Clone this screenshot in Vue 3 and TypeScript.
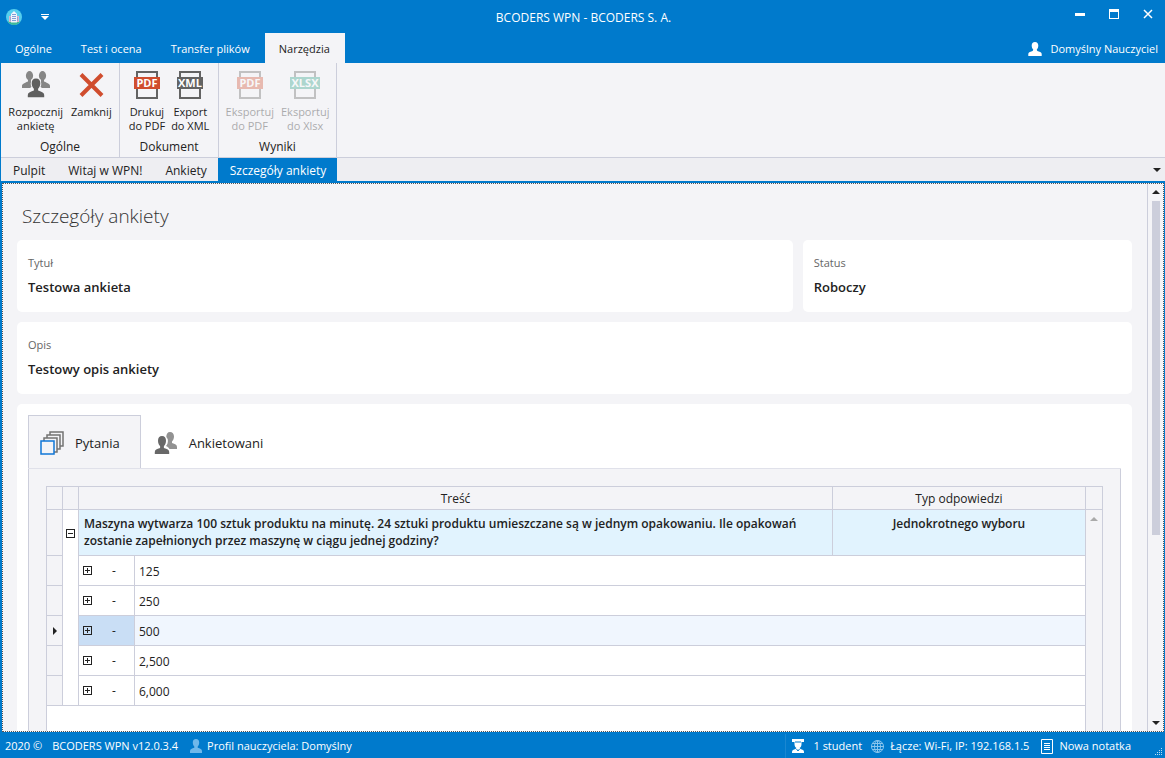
<script setup lang="ts">
import { ref } from 'vue'

interface Command {
  icon: string
  lines: string[]
  label?: string
  disabled?: boolean
}
interface Group {
  name: string
  key: string
  commands: Command[]
}

const ribbonTabs = ['Ogólne', 'Test i ocena', 'Transfer plików', 'Narzędzia']
const activeRibbon = ref('Narzędzia')

const groups: Group[] = [
  {
    name: 'Ogólne',
    key: 'general',
    commands: [
      { icon: 'people', lines: ['Rozpocznij', 'ankietę'] },
      { icon: 'close', lines: ['Zamknij'] },
    ],
  },
  {
    name: 'Dokument',
    key: 'document',
    commands: [
      { icon: 'file', label: 'PDF', lines: ['Drukuj', 'do PDF'] },
      { icon: 'file', label: 'XML', lines: ['Export', 'do XML'] },
    ],
  },
  {
    name: 'Wyniki',
    key: 'results',
    commands: [
      { icon: 'file', label: 'PDF', lines: ['Eksportuj', 'do PDF'], disabled: true },
      { icon: 'file', label: 'XLSX', lines: ['Eksportuj', 'do Xlsx'], disabled: true },
    ],
  },
]

const documents = ['Pulpit', 'Witaj w WPN!', 'Ankiety', 'Szczegóły ankiety']
const activeDocument = ref('Szczegóły ankiety')

const answers = ['125', '250', '500', '2,500', '6,000']
const selected = ref('500')
</script>

<template>
  <div class="window">
    <header class="titlebar">
      <svg class="logo" viewBox="0 0 16 16" aria-hidden="true">
        <circle cx="8" cy="8" r="8" fill="#55cfee" />
        <path d="M1.5 12.5h13A8 8 0 0 1 8 16a8 8 0 0 1-6.500-3.500z" fill="#3fb89a" />
        <path d="M3 7h10v6H3z" fill="#dcb4cb" />
        <path d="M5 5l3-3 3 3v8.500H5z" fill="#f2f4fb" />
        <path d="M6 5h4v1H6zM6 7h4v1H6zM6 9h4v1H6zM6 11h4v1H6zM4 8h.7v4H4zM11.300 8h.7v4h-.7z" fill="#7f9fd6" />
      </svg>
      <button class="quick" aria-label="Pasek szybkiego dostępu">
        <svg width="8" height="6" viewBox="0 0 8 6"><path d="M0 0h8v1H0zM0 2h8L4 6z" fill="#fff" /></svg>
      </button>
      <h1>BCODERS WPN - BCODERS S. A.</h1>
      <div class="window-buttons">
        <button aria-label="Minimalizuj"><svg width="10" height="10"><path d="M0 4h10v3H0z" fill="#fff" /></svg></button>
        <button aria-label="Maksymalizuj"><svg width="10" height="10"><path d="M0 0h10v10H0zM1 3v6h8V3z" fill="#fff" fill-rule="evenodd" /></svg></button>
        <button aria-label="Zamknij okno"><svg width="10" height="10"><path d="M1 1l8 8M9 1L1 9" stroke="#fff" stroke-width="1.500" /></svg></button>
      </div>
    </header>

    <nav class="ribbon-tabs">
      <button v-for="tab in ribbonTabs" :key="tab" :class="{ active: tab === activeRibbon }" @click="activeRibbon = tab">{{ tab }}</button>
      <button class="account">
        <svg width="14" height="14" viewBox="0 0 14 14"><path d="M7 0c2.200 0 3.300 1.500 3.300 3.600 0 1.800-.7 3.200-1.500 4 0 .8.300 1.400 1.200 1.700 2.200.7 3.700 1.200 3.700 2.700V14H.3v-2c0-1.500 1.500-2 3.700-2.700.9-.3 1.200-.9 1.200-1.700-.8-.8-1.500-2.200-1.500-4C3.700 1.500 4.800 0 7 0z" fill="#fff" /></svg>
        Domyślny Nauczyciel
      </button>
    </nav>

    <section class="ribbon">
      <div v-for="group in groups" :key="group.key" class="group" :class="group.key">
        <div class="commands">
          <button v-for="command in group.commands" :key="command.lines.join()" class="command" :disabled="command.disabled">
            <svg v-if="command.icon === 'people'" width="32" height="32" viewBox="0 0 32 32">
              <g fill="#868686">
                <ellipse cx="9.500" cy="7.700" rx="3.600" ry="4.700" />
                <ellipse cx="22.500" cy="7.700" rx="3.600" ry="4.700" />
                <path d="M8 11h3v3l1 1v3.500l-2 1.500H2v-2c0-2 1.800-2.800 6-4.500zM24 11h-3v3l-1 1v3.500l2 1.500h8v-2c0-2-1.800-2.800-6-4.500z" />
              </g>
              <ellipse cx="16" cy="15.800" rx="5.300" ry="6.300" fill="#f4f4f7" />
              <path d="M16 10.500c2.900 0 4.300 2 4.300 4.800 0 2.400-1 4.300-2.200 5.400v1.800c4 1.500 6.100 2.200 6.100 4.500v2.200H7.800V27c0-2.300 2.100-3 6.100-4.500v-1.800c-1.200-1.100-2.200-3-2.200-5.400 0-2.800 1.400-4.800 4.300-4.800z" fill="#5f5f5f" />
            </svg>
            <svg v-else-if="command.icon === 'close'" width="32" height="32" viewBox="0 0 32 32">
              <path d="M6 6.500l21 21M27 6.500l-21 21" stroke="#d04d2e" stroke-width="4" />
            </svg>
            <svg v-else width="32" height="32" viewBox="0 0 32 32">
              <path d="M6 9V4h20v5M6 21v9h20v-9" fill="none" stroke="#636363" stroke-width="2" />
              <path v-if="command.label === 'XLSX'" d="M1 9h30v12H1z" fill="#2ca184" />
              <path v-else d="M3 9h26v12H3z" :fill="command.label === 'PDF' ? '#d04d2e' : '#636363'" />
              <text x="16" y="19" text-anchor="middle" class="file-label">{{ command.label }}</text>
            </svg>
            <span v-for="line in command.lines" :key="line">{{ line }}</span>
          </button>
        </div>
        <h2>{{ group.name }}</h2>
      </div>
    </section>

    <nav class="documents">
      <button v-for="doc in documents" :key="doc" :class="{ active: doc === activeDocument }" @click="activeDocument = doc">{{ doc }}</button>
      <button class="more" aria-label="Lista kart"><svg width="8" height="4"><path d="M0 0h8L4 4z" fill="#222" /></svg></button>
    </nav>

    <div class="viewport">
      <main>
        <h2 class="page-title">Szczegóły ankiety</h2>
        <div class="cards">
          <section class="card"><span>Tytuł</span><strong>Testowa ankieta</strong></section>
          <section class="card"><span>Status</span><strong>Roboczy</strong></section>
          <section class="card wide"><span>Opis</span><strong>Testowy opis ankiety</strong></section>
        </div>
        <section class="details">
          <div class="tabs" role="tablist">
            <button role="tab" aria-selected="true" class="active">
              <svg width="24" height="24" viewBox="0 0 24 24" fill="none">
                <path d="M10 4V1h13v14h-3M7 7V4h13v14h-3M4 10V7h13v14h-3" stroke="#737373" stroke-width="1.500" />
                <path d="M1 10h13v13H1z" fill="#f4f4f7" stroke="#1177d7" stroke-width="1.500" />
              </svg>
              Pytania
            </button>
            <button role="tab" aria-selected="false">
              <svg width="24" height="24" viewBox="0 0 24 24">
                <path d="M16 1c2.500 0 4 1.800 4 4.500 0 2.200-1 4-2 5v1.500c3 1.200 5 1.700 5 4V18h-7.500c-.8-1.500-2-2.400-3.500-3 1.500-1.500 2.200-4 1.800-6.500-.3-1-.8-1.800-1.500-2.500C12.300 3 13.500 1 16 1z" fill="#929292" />
                <path d="M8 5c2.600 0 4 1.900 4 4.700 0 2.500-1 4.300-2.100 5.300v2c3.300 1.200 5.300 1.700 5.300 4v2H.8v-2c0-2.300 2-2.800 5.300-4v-2C5 14 4 12.200 4 9.700 4 6.900 5.400 5 8 5z" fill="#686868" />
              </svg>
              Ankietowani
            </button>
          </div>
          <div class="tab-panel">
            <table>
              <colgroup><col class="c-mark" /><col class="c-mark" /><col class="c-no" /><col /><col class="c-type" /><col class="c-scroll" /></colgroup>
              <thead>
                <tr><th></th><th></th><th colspan="2">Treść</th><th>Typ odpowiedzi</th><th></th></tr>
              </thead>
              <tbody>
                <tr class="question">
                  <td class="mark"></td>
                  <td class="expand" rowspan="6"><button class="toggle" aria-label="Zwiń"></button></td>
                  <td class="text" colspan="2">Maszyna wytwarza 100 sztuk produktu na minutę. 24 sztuki produktu umieszczane są w jednym opakowaniu. Ile opakowań zostanie zapełnionych przez maszynę w ciągu jednej godziny?</td>
                  <td class="type">Jednokrotnego wyboru</td>
                  <td class="scroll" rowspan="7"><svg width="8" height="4"><path d="M0 4h8L4 0z" fill="#aaa" /></svg></td>
                </tr>
                <tr v-for="answer in answers" :key="answer" class="answer" :class="{ selected: answer === selected }" @click="selected = answer">
                  <td class="mark"><svg v-if="answer === selected" width="4" height="8"><path d="M0 0v8l4-4z" fill="#222" /></svg></td>
                  <td class="no"><div><button class="toggle plus" aria-label="Rozwiń"></button><span>-</span></div></td>
                  <td class="value" colspan="2">{{ answer }}</td>
                </tr>
                <tr class="rest"><td colspan="5"></td></tr>
              </tbody>
            </table>
          </div>
        </section>
      </main>
      <div class="scrollbar">
        <button aria-label="W górę"><svg width="8" height="4"><path d="M0 4h8L4 0z" fill="#222" /></svg></button>
        <div class="track"><div class="thumb"></div></div>
        <button aria-label="W dół"><svg width="8" height="4"><path d="M0 0h8L4 4z" fill="#222" /></svg></button>
      </div>
    </div>

    <footer>
      <span>2020 ©</span>
      <span class="version">BCODERS WPN v12.0.3.4</span>
      <svg width="12" height="14" viewBox="0 0 12 14"><path d="M6 0c2.200 0 3.200 1.500 3.200 3.500C9.200 5.300 8.500 6.800 7.700 7.500v1.200C10 9.500 12 10 12 12v2H0v-2c0-2 2-2.500 4.300-3.300V7.500C3.500 6.800 2.800 5.300 2.800 3.500 2.800 1.500 3.800 0 6 0z" fill="#70b8ea" /></svg>
      <span class="profile">Profil nauczyciela: Domyślny</span>
      <div class="status">
        <svg width="12" height="14" viewBox="0 0 12 14"><path d="M0 0h12v3H9.500v2.200C9.500 7 8.500 8.500 7.500 9l1 1c2 .5 3.500 1 3.500 3v1H0v-1c0-2 1.500-2.500 3.500-3l1-1C3.500 8.500 2.500 7 2.500 5.200V3H0z" fill="#fff" /><path d="M3 3h6M4.500 10L6 12l1.500-2" fill="none" stroke="#007acc" /></svg>
        <span class="students">1 student</span>
        <svg width="13" height="13" viewBox="0 0 13 13" fill="none" stroke="#8bc5ed"><circle cx="6.500" cy="6.500" r="6" /><ellipse cx="6.500" cy="6.500" rx="3" ry="6" /><path d="M6.500 0v13M0 6.500h13M1.500 3.500h10M1.500 9.500h10" /></svg>
        <span class="link">Łącze: Wi-Fi, IP: 192.168.1.5</span>
        <button class="note"><svg width="12" height="15" viewBox="0 0 12 15" fill="none" stroke="#fff"><path d="M.5.5h11v14H.5zM3 4.500h6M3 6.500h6M3 8.500h6M3 10.500h6" /></svg>Nowa notatka</button>
        <svg class="grip" width="8" height="8" viewBox="0 0 8 8"><path d="M6 0h1v1H6zM4 2h1v1H4zM6 2h1v1H6zM2 4h1v1H2zM4 4h1v1H4zM6 4h1v1H6zM0 6h1v1H0zM2 6h1v1H2zM4 6h1v1H4zM6 6h1v1H6z" fill="#b8dcf5" /></svg>
      </div>
    </footer>
  </div>
</template>

<style>
body { margin: 0; overflow: hidden; }
</style>

<style scoped>
* { box-sizing: border-box; }
.window { height: 100vh; display: flex; flex-direction: column; background: #007acc; color: #222; font-family: "Open Sans", "Noto Sans", sans-serif; font-size: 12px; line-height: 14px; }
button { font: inherit; color: inherit; background: none; border: 0; padding: 0; margin: 0; white-space: nowrap; }
svg { display: block; flex: none; }
h1, h2 { margin: 0; font-size: 12px; font-weight: 400; }

.titlebar { height: 33px; flex: none; display: grid; grid-template-columns: 16px 32px 1fr 94px; align-items: center; padding: 0 6px; color: #fff; }
.logo { width: 16px; height: 16px; }
.quick { display: flex; justify-content: flex-end; padding-right: 5px; }
.titlebar h1 { text-align: center; padding: 2px 0 0 48px; }
.window-buttons { display: flex; justify-content: flex-end; gap: 24px; padding: 0 6px 6px 0; }

.ribbon-tabs { height: 30px; flex: none; display: flex; padding: 0 7px 0 1px; color: #fff; font-size: 11px; }
.ribbon-tabs button { padding: 2px 15px 0 14px; }
.ribbon-tabs .active { background: #f4f4f7; color: #222; }
.ribbon-tabs .account { margin-left: auto; padding-right: 0; display: flex; align-items: center; gap: 8px; }

.ribbon { height: 95px; flex: none; display: flex; margin-left: 1px; background: #f4f4f7; border-bottom: 1px solid #cccedb; }
.group { display: flex; flex-direction: column; justify-content: space-between; border-right: 1px solid #cccedb; padding: 5px 0 2px; }
.general { width: 119px; }
.document { width: 99px; }
.results { width: 118px; }
.commands { display: grid; grid-auto-flow: column; grid-auto-columns: auto; justify-content: center; gap: 6px; }
.general .commands { gap: 8px; }
.results .commands { gap: 7px; }
.command { display: flex; flex-direction: column; align-items: center; font-size: 11px; }
.command svg { margin-bottom: 5px; }
.command:disabled { opacity: .35; }
.group h2 { text-align: center; line-height: 16px; }
.file-label { font: 700 11px "Open Sans", sans-serif; fill: #fff; }

.documents { height: 25px; flex: none; display: flex; margin-left: 1px; background: #eeeef2; border-bottom: 2px solid #007acc; }
.documents button { padding: 2px 11px 0 12px; }
.documents .active { background: #007acc; color: #fff; }
.documents .more { margin-left: auto; padding: 0 4px; }

.viewport { flex: 1; min-height: 0; display: flex; margin: 0 1px 2px 2px; background: #f4f4f7; border: 1px dotted #555; }
main { flex: 1; min-width: 0; overflow: hidden; padding: 18px 15px 0 14px; }
.page-title { font-size: 19px; line-height: 28px; font-weight: 300; padding-left: 5px; margin-bottom: 10px; color: #333; }
.cards { display: grid; grid-template-columns: 775fr 329fr; gap: 10px; }
.card { height: 72px; padding: 14px 11px; background: #fff; border-radius: 5px; display: flex; flex-direction: column; gap: 6px; line-height: 18px; }
.card span { color: #666; font-size: 11px; }
.card strong { font-size: 13px; font-weight: 600; }
.wide { grid-column: 1 / -1; }
.details { margin-top: 10px; background: #fff; border-radius: 5px 5px 0 0; padding: 11px; }
.tabs { display: flex; border-bottom: 1px solid #e0e1ea; }
.tabs button { height: 53px; padding: 2px 14px 0 13px; display: flex; align-items: center; gap: 11px; font-size: 13px; }
.tabs .active { padding-right: 20px; padding-left: 11px; border: 1px solid #cccedb; border-bottom: 0; background: #f4f4f7; margin-bottom: -1px; }
.tab-panel { background: #f4f4f7; border: 1px solid #cccedb; border-top: 0; padding: 17px; }

table { width: 100%; table-layout: fixed; border-collapse: collapse; font-size: 12px; line-height: 17px; }
.c-mark { width: 16px; }
.c-no { width: 56px; }
.c-type { width: 253px; }
.c-scroll { width: 17px; }
th, td { border: 1px solid #cccedb; padding: 0; }
th { height: 23px; font-weight: 400; }
td { background: #fff; }
td.mark, td.scroll { background: #f4f4f7; }
td.mark svg { margin: auto; }
.scroll { vertical-align: top; }
.scroll svg { margin: 7px auto 0; }
.question { height: 46px; }
.question .text, .question .type { background: #e1f3fe; font-weight: 600; vertical-align: top; padding: 5px; }
.question .type { text-align: center; }
.expand { vertical-align: top; }
.expand .toggle { margin: 19px auto 0; }
.toggle { display: block; width: 9px; height: 9px; border: 1px solid #222; background: linear-gradient(#222, #222) center / 5px 1px no-repeat #fff; }
.plus { background: linear-gradient(#222, #222) center / 5px 1px no-repeat, linear-gradient(#222, #222) center / 1px 5px no-repeat; }
.answer { height: 30px; }
.no div { display: flex; align-items: center; gap: 20px; padding-left: 4px; }
.value { padding: 2px 4px 0; }
.selected .no { background: #c9def5; }
.selected .value { background: #f0f6fe; }
.rest { height: 200px; }

.scrollbar { width: 16px; flex: none; border-left: 1px solid #cccedb; display: flex; flex-direction: column; }
.scrollbar button { height: 16px; flex: none; display: flex; align-items: center; justify-content: center; }
.track { flex: 1; padding: 1px 3px 0 4px; }
.thumb { height: 65%; background: #cccedb; }

footer { height: 24px; flex: none; display: flex; align-items: center; padding: 0 5px; color: #fff; white-space: nowrap; font-size: 11px; }
.version { margin: 0 12px 0 10px; }
.profile { margin-left: 5px; }
.status { margin-left: auto; align-self: stretch; display: flex; align-items: center; border-left: 1px solid #1a87d1; padding-left: 6px; }
.students { margin: 0 9px; }
.link { margin: 0 12px 0 6px; }
.note { display: flex; align-items: center; gap: 6px; margin-right: 24px; }
.grip { align-self: flex-end; margin: 0 -3px 2px 0; }
</style>
